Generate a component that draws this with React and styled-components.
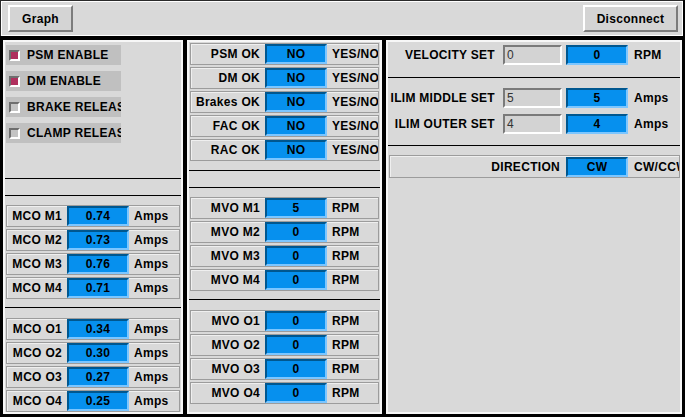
import React from 'react'
import styled, { createGlobalStyle } from 'styled-components'

const GlobalStyle = createGlobalStyle`
  html, body {
    margin: 0;
    padding: 0;
    background: #000;
  }
  body {
    font-family: "Liberation Sans", Arial, Helvetica, sans-serif;
    font-size: 12px;
    font-weight: 700;
    letter-spacing: 0.3px;
    color: #000;
  }
`

const Screen = styled.div`
  width: 685px;
  height: 417px;
  background: #000;
  display: flex;
  flex-direction: column;
  overflow: hidden;
`

const TopBar = styled.div`
  height: 36px;
  box-sizing: border-box;
  margin-right: 2px;
  background: #d9d9d9;
  border-top: 1px solid #2a2a2a;
  border-left: 1px solid #2a2a2a;
  box-shadow: inset 1px 1px 0 #fff, inset -1px -1px 0 #fff;
  display: flex;
  align-items: center;
  justify-content: space-between;
  padding: 0 5px 0 7px;
`

const Button = styled.button`
  width: ${({ $width }) => $width}px;
  height: 27px;
  box-sizing: border-box;
  background: #d4d4d4;
  border: 2px solid;
  border-color: #fff #7c7c7c #7c7c7c #fff;
  font: inherit;
  font-weight: 700;
  letter-spacing: inherit;
  color: #000;
  padding: 0;
  cursor: pointer;
`

const Panels = styled.div`
  flex: 1;
  display: flex;
  gap: 4px;
  padding: 4px 3px 3px 3px;
  min-height: 0;
`

const Panel = styled.div`
  width: ${({ $width }) => ($width ? `${$width}px` : 'auto')};
  flex: ${({ $width }) => ($width ? 'none' : '1')};
  box-sizing: border-box;
  background: #d9d9d9;
  border: 2px solid #f7f7f7;
  display: flex;
  flex-direction: column;
  overflow: hidden;
`

const Rule = styled.div`
  height: 1px;
  background: #000;
  flex: none;
`

const Blank = styled.div`
  height: ${({ $h }) => $h}px;
  flex: none;
`

const ToggleArea = styled.div`
  height: 136px;
  box-sizing: border-box;
  padding: 3px 0 0 1px;
  display: flex;
  flex-direction: column;
  gap: 6px;
  flex: none;
`

const Toggle = styled.div`
  width: 115px;
  height: 20px;
  background: #c0c0c0;
  display: flex;
  align-items: center;
  padding-left: 3px;
  box-sizing: border-box;
  gap: 7px;
  white-space: nowrap;
  overflow: hidden;
`

const Indicator = styled.span`
  width: 11px;
  height: 11px;
  flex: none;
  box-sizing: border-box;
  border: 2px solid;
  border-color: #6e6e6e #fff #fff #6e6e6e;
  background: ${({ $on }) => ($on ? '#b0305e' : '#c4c4c4')};
`

const RowGroup = styled.div`
  display: flex;
  flex-direction: column;
  gap: 2px;
  padding: ${({ $top }) => $top}px 1px ${({ $bottom }) => $bottom}px 1px;
  flex: none;
`

const Row = styled.div`
  height: 22px;
  box-sizing: border-box;
  border: 1px solid #9c9c9c;
  box-shadow: inset 1px 1px 0 #efefef;
  display: grid;
  grid-template-columns: ${({ $label }) => $label}px 62px 1fr;
  column-gap: 5px;
  align-items: center;
  white-space: nowrap;
  overflow: hidden;
`

const Label = styled.span`
  text-align: right;
  overflow: hidden;
`

const Unit = styled.span`
  overflow: hidden;
`

const Value = styled.div`
  height: 20px;
  box-sizing: border-box;
  background: #0690ee;
  border: 2px solid;
  border-color: #00578f #7cc6ff #7cc6ff #00578f;
  display: flex;
  align-items: center;
  justify-content: center;
  font-weight: 700;
`

const SetSection = styled.div`
  padding: ${({ $top }) => $top}px 0 ${({ $bottom }) => $bottom}px 0;
  display: flex;
  flex-direction: column;
  gap: 6px;
  flex: none;
`

const SetRow = styled.div`
  height: 20px;
  display: grid;
  grid-template-columns: 109px 61px 62px 1fr;
  column-gap: 4px;
  align-items: center;
  white-space: nowrap;
  & > span:first-child {
    margin-right: 2px;
  }
  & > span:last-child {
    padding-left: 2px;
  }
`

const Entry = styled.div`
  height: 20px;
  box-sizing: border-box;
  margin-left: 2px;
  background: #d3d3d3;
  border: 2px solid;
  border-color: #7a7a7a #fff #fff #7a7a7a;
  font-weight: 400;
  color: #333;
  padding-left: 2px;
  display: flex;
  align-items: center;
`

const DirectionRow = styled.div`
  height: 23px;
  margin: 9px 0 0 1px;
  box-sizing: border-box;
  border: 1px solid #9c9c9c;
  box-shadow: inset 1px 1px 0 #efefef;
  display: grid;
  grid-template-columns: 170px 62px 1fr;
  column-gap: 6px;
  align-items: center;
  white-space: nowrap;
  overflow: hidden;
`

const toggles = [
  { label: 'PSM ENABLE', on: true },
  { label: 'DM ENABLE', on: true },
  { label: 'BRAKE RELEASE', on: false },
  { label: 'CLAMP RELEASE', on: false },
]

const mcoM = [
  ['MCO M1', '0.74'],
  ['MCO M2', '0.73'],
  ['MCO M3', '0.76'],
  ['MCO M4', '0.71'],
]
const mcoO = [
  ['MCO O1', '0.34'],
  ['MCO O2', '0.30'],
  ['MCO O3', '0.27'],
  ['MCO O4', '0.25'],
]
const status = ['PSM OK', 'DM OK', 'Brakes OK', 'FAC OK', 'RAC OK']
const mvoM = [
  ['MVO M1', '5'],
  ['MVO M2', '0'],
  ['MVO M3', '0'],
  ['MVO M4', '0'],
]
const mvoO = [
  ['MVO O1', '0'],
  ['MVO O2', '0'],
  ['MVO O3', '0'],
  ['MVO O4', '0'],
]

function Readouts({ rows, unit, label, top, bottom }) {
  return (
    <RowGroup $top={top} $bottom={bottom}>
      {rows.map(([name, value]) => (
        <Row key={name} $label={label}>
          <Label>{name}</Label>
          <Value>{value}</Value>
          <Unit>{unit}</Unit>
        </Row>
      ))}
    </RowGroup>
  )
}

function SetPoint({ label, current, value, unit }) {
  return (
    <SetRow>
      <Label>{label}</Label>
      <Entry>{current}</Entry>
      <Value>{value}</Value>
      <Unit>{unit}</Unit>
    </SetRow>
  )
}

export default function App() {
  return (
    <Screen>
      <GlobalStyle />
      <TopBar>
        <Button $width={65}>Graph</Button>
        <Button $width={95}>Disconnect</Button>
      </TopBar>
      <Panels>
        <Panel $width={180}>
          <ToggleArea>
            {toggles.map((t) => (
              <Toggle key={t.label}>
                <Indicator $on={t.on} />
                {t.label}
              </Toggle>
            ))}
          </ToggleArea>
          <Rule />
          <Blank $h={16} />
          <Rule />
          <Readouts rows={mcoM} unit="Amps" label={55} top={9} bottom={8} />
          <Rule />
          <Readouts rows={mcoO} unit="Amps" label={55} top={10} bottom={0} />
        </Panel>
        <Panel $width={195}>
          <RowGroup $top={1} $bottom={9}>
            {status.map((name) => (
              <Row key={name} $label={69}>
                <Label>{name}</Label>
                <Value>NO</Value>
                <Unit>YES/NO</Unit>
              </Row>
            ))}
          </RowGroup>
          <Rule />
          <Blank $h={16} />
          <Rule />
          <Readouts rows={mvoM} unit="RPM" label={69} top={9} bottom={8} />
          <Rule />
          <Readouts rows={mvoO} unit="RPM" label={69} top={10} bottom={0} />
        </Panel>
        <Panel>
          <SetSection $top={3} $bottom={12}>
            <SetPoint label="VELOCITY SET" current="0" value="0" unit="RPM" />
          </SetSection>
          <Rule />
          <SetSection $top={10} $bottom={11}>
            <SetPoint label="ILIM MIDDLE SET" current="5" value="5" unit="Amps" />
            <SetPoint label="ILIM OUTER SET" current="4" value="4" unit="Amps" />
          </SetSection>
          <Rule />
          <DirectionRow>
            <Label>DIRECTION</Label>
            <Value>CW</Value>
            <Unit>CW/CCW</Unit>
          </DirectionRow>
        </Panel>
      </Panels>
    </Screen>
  )
}
